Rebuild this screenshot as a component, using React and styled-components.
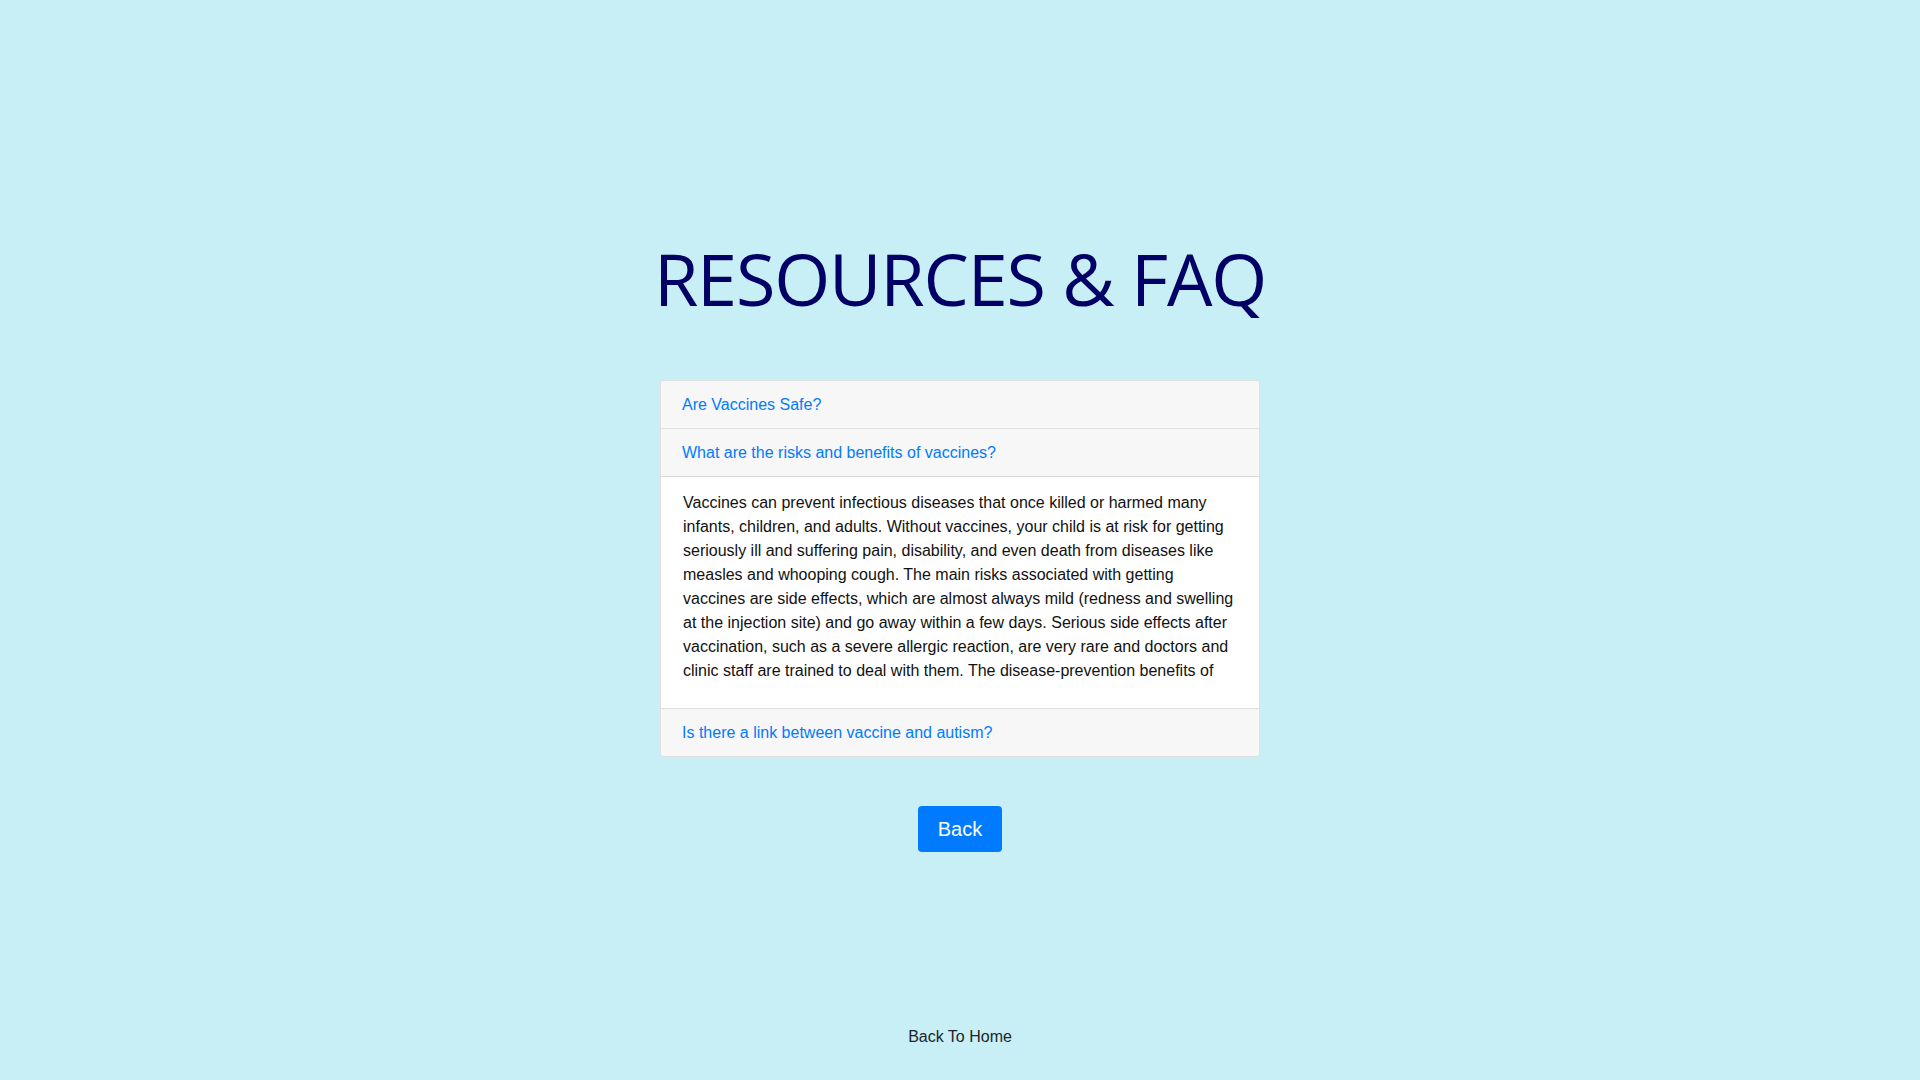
import React, { useState } from "react";
import styled, { createGlobalStyle } from "styled-components";

const GlobalStyle = createGlobalStyle`
  * {
    box-sizing: border-box;
  }
  body {
    margin: 0;
    background: #c8eff6;
    font-family: "Liberation Sans", Arial, sans-serif;
    font-size: 16px;
    line-height: 1.5;
    color: #212529;
  }
`;

const PageStyled = styled.div`
  min-height: 100vh;
  display: flex;
  flex-direction: column;
  align-items: center;
  padding-top: 235px;
`;

const TitleStyled = styled.h1`
  margin: 0 0 59px 0;
  font-family: "Open Sans", "Noto Sans", sans-serif;
  font-weight: 400;
  font-size: 72px;
  line-height: 1.2;
  letter-spacing: -1.2px;
  color: #000066;
  text-align: center;
`;

const AccordionStyled = styled.div`
  width: 600px;
  border: 1px solid rgba(0, 0, 0, 0.125);
  border-radius: 4px;
  overflow: hidden;
  background: #fff;
`;

const ItemStyled = styled.div`
  &:not(:last-child) {
    border-bottom: 1px solid rgba(0, 0, 0, 0.125);
  }
`;

const HeaderStyled = styled.div`
  padding: 12px 20px 11px 21px;
  background: #f7f7f7;
  border-bottom: ${(p) => (p.open ? "1px solid rgba(0, 0, 0, 0.125)" : "none")};
  cursor: pointer;
`;

const HeaderLinkStyled = styled.span`
  color: #007bff;
  font-size: 16px;
  line-height: 24px;

  &:hover {
    text-decoration: underline;
  }
`;

const BodyStyled = styled.div`
  padding: 14px 23px 25px 22px;
  background: #fff;
  color: #111;
  line-height: 24px;
`;

const BackButtonStyled = styled.button`
  margin-top: 49px;
  padding: 8px 20px;
  border: none;
  border-radius: 4px;
  background: #007bff;
  color: #fff;
  font-family: "Liberation Sans", Arial, sans-serif;
  font-size: 20px;
  line-height: 30px;
  cursor: pointer;

  &:hover {
    background: #0069d9;
  }
`;

const FooterStyled = styled.div`
  margin-top: auto;
  padding-bottom: 31px;
  color: #212529;
  font-size: 16px;
  line-height: 24px;
`;

const faqs = [
  {
    q: "Are Vaccines Safe?",
    a: "Vaccines are tested thoroughly before they are licensed and are monitored continuously for safety after they are in use.",
  },
  {
    q: "What are the risks and benefits of vaccines?",
    a: "Vaccines can prevent infectious diseases that once killed or harmed many infants, children, and adults. Without vaccines, your child is at risk for getting seriously ill and suffering pain, disability, and even death from diseases like measles and whooping cough. The main risks associated with getting vaccines are side effects, which are almost always mild (redness and swelling at the injection site) and go away within a few days. Serious side effects after vaccination, such as a severe allergic reaction, are very rare and doctors and clinic staff are trained to deal with them. The disease-prevention benefits of",
  },
  {
    q: "Is there a link between vaccine and autism?",
    a: "No. Many studies have looked at this question and found no link between vaccines and autism.",
  },
];

const App = () => {
  const [openIdx, setOpenIdx] = useState(1);

  return (
    <>
      <GlobalStyle />
      <PageStyled>
        <TitleStyled>RESOURCES &amp; FAQ</TitleStyled>

        <AccordionStyled>
          {faqs.map((item, i) => (
            <ItemStyled key={item.q}>
              <HeaderStyled
                open={openIdx === i}
                onClick={() => setOpenIdx(openIdx === i ? -1 : i)}
              >
                <HeaderLinkStyled>{item.q}</HeaderLinkStyled>
              </HeaderStyled>
              {openIdx === i && <BodyStyled>{item.a}</BodyStyled>}
            </ItemStyled>
          ))}
        </AccordionStyled>

        <BackButtonStyled>Back</BackButtonStyled>

        <FooterStyled>Back To Home</FooterStyled>
      </PageStyled>
    </>
  );
};

export default App;
